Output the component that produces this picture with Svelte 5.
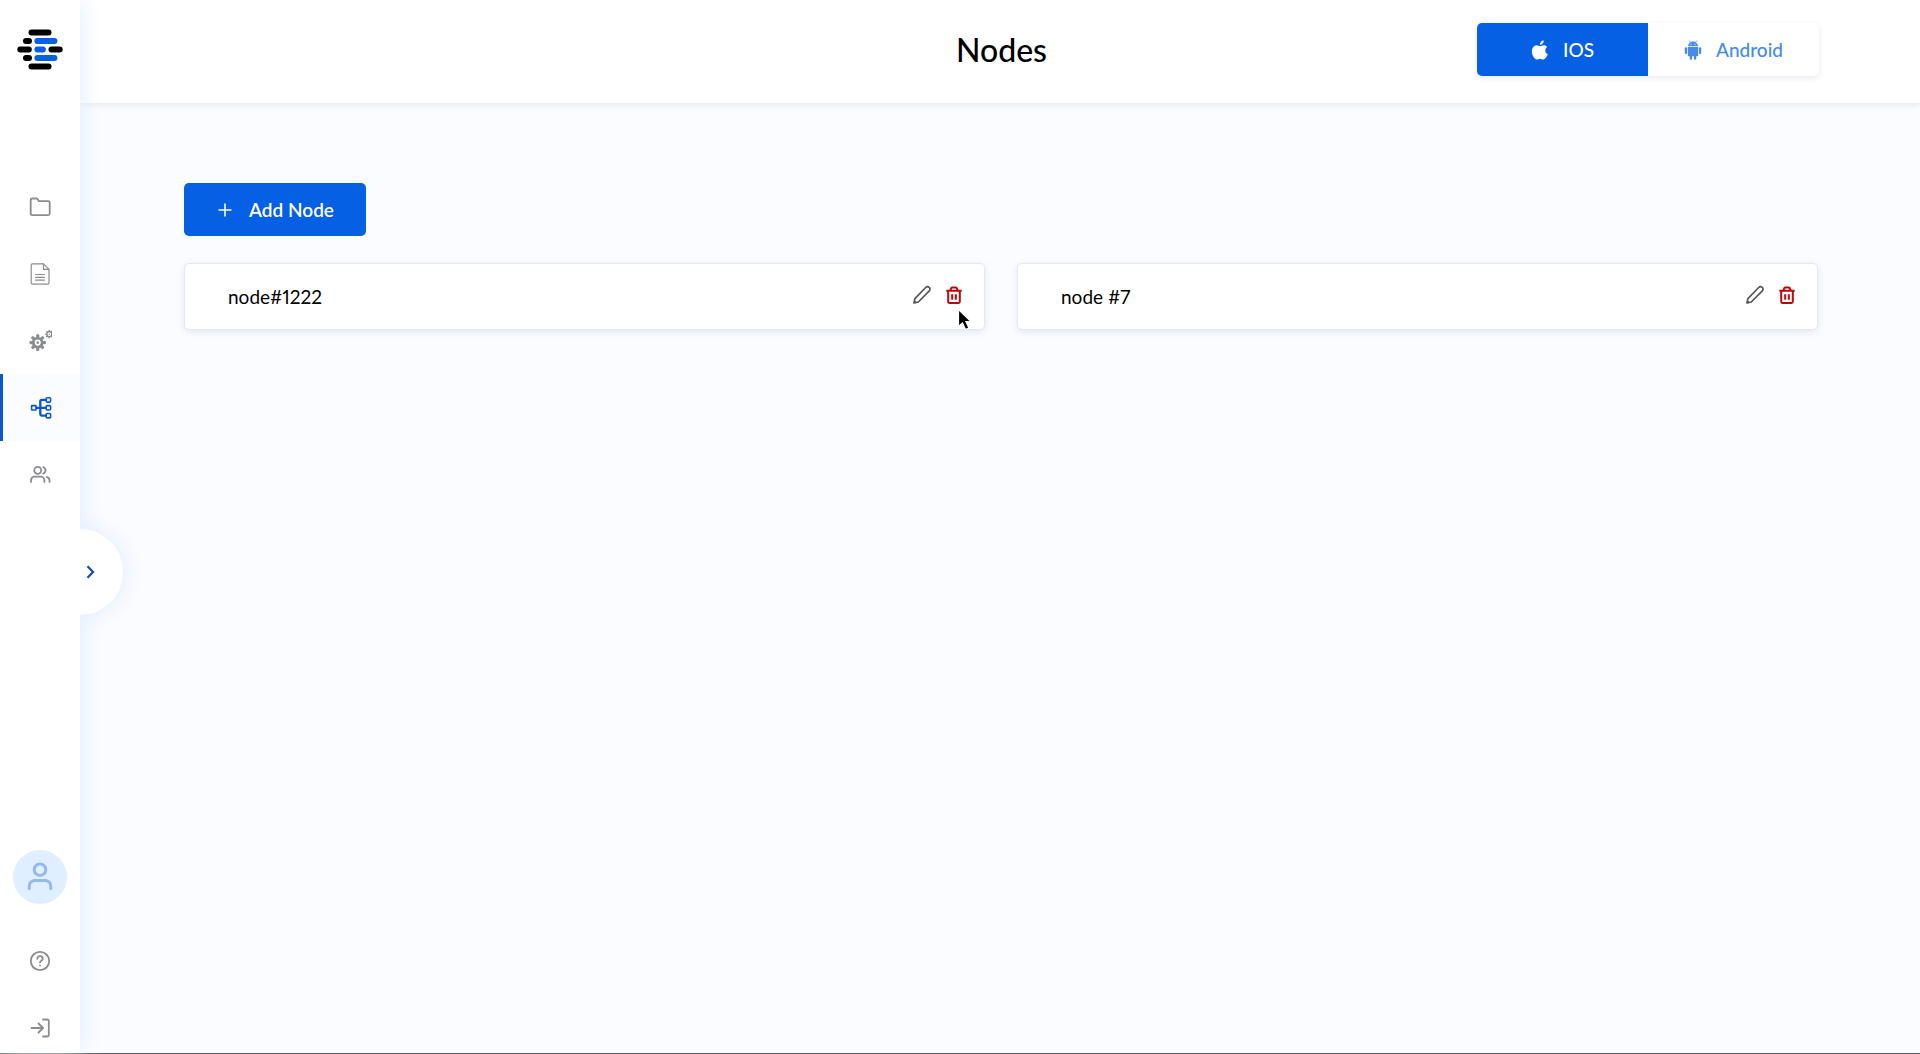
<script>
  let platform = $state('ios');
  const nodes = [{ name: 'node#1222', pointer: true }, { name: 'node #7', pointer: false }];
  const teeth = [0, 45, 90, 135, 180, 225, 270, 315];
  const links = [
    { id: 'folder', label: 'Projects' },
    { id: 'file', label: 'Documents' },
    { id: 'gears', label: 'Settings' },
    { id: 'tree', label: 'Nodes' },
    { id: 'users', label: 'Team' }
  ];
</script>

<div class="app">
  <aside class="sidebar">
    <a class="logo" href="#home" aria-label="Home">
      <svg width="46" height="41" viewBox="0 0 46 41">
        <g fill="#000">
          <rect x="11.5" y=".4" width="23" height="6" rx="3" />
          <rect x="6" y="9" width="9" height="6" rx="3" />
          <rect x=".3" y="17.5" width="14.500" height="6" rx="3" />
          <rect x="31.5" y="17.5" width="14.2" height="6" rx="3" />
          <rect x="6" y="26" width="9" height="6" rx="3" />
          <rect x="11.5" y="34.5" width="23" height="6" rx="3" />
        </g>
        <g fill="#0560e3">
          <rect x="17.4" y="9" width="23" height="6" rx="3" />
          <rect x="17.4" y="17.5" width="11.5" height="6" rx="3" />
          <rect x="17.4" y="26" width="23" height="6" rx="3" />
        </g>
      </svg>
    </a>

    <nav class="menu" aria-label="Main">
      {#each links as link (link.id)}
        <a class="item" class:active={link.id === 'tree'} href={'#' + link.id} aria-label={link.label}>
          <svg width="24" height="24" viewBox="0 0 24 24" fill="none" stroke="currentColor" stroke-width="1.8" stroke-linecap="round" stroke-linejoin="round">
            {#if link.id === 'folder'}
              <path d="M4.2 3.5h4.3c.6 0 1 .3 1.3.8l1 1.8h9.4a1.5 1.5 0 0 1 1.5 1.5v11a1.5 1.5 0 0 1-1.5 1.5h-16a1.5 1.5 0 0 1-1.5-1.5V5a1.5 1.5 0 0 1 1.5-1.5z" />
            {:else if link.id === 'file'}
              <g stroke-width="1.2">
                <path d="M4.5 1.8h11L21 7.3v13.5a1.4 1.4 0 0 1-1.4 1.4h-15a1.4 1.4 0 0 1-1.4-1.4V3.2a1.4 1.4 0 0 1 1.3-1.4z" />
                <path d="M15.5 1.8v5.5H21M7.500 12.500h9M7.500 15.300h9M7.500 18.100h9" />
              </g>
            {:else if link.id === 'gears'}
              <g stroke="none" fill="currentColor">
                {#each teeth as angle (angle)}
                  <rect x="8.1" y="5.3" width="3.2" height="5" rx="1.1" transform="rotate({angle} 9.7 13.6)" />
                  <rect x="20.5" y="1.100" width="1.600" height="2.200" rx=".5" transform="rotate({angle} 21.3 5.2)" />
                {/each}
              </g>
              <circle cx="9.7" cy="13.6" r="4.4" stroke-width="2.6" />
              <circle cx="9.7" cy="13.6" r="1.3" fill="currentColor" stroke="none" />
              <circle cx="21.3" cy="5.2" r="2.500" stroke-width="1.200" />
              <circle cx="21.3" cy="5.2" r=".7" fill="currentColor" stroke="none" />
            {:else if link.id === 'tree'}
              <g stroke-width="2.300"><path d="M8.3 11.800h9M18 3.900h-4.200a1.500 1.500 0 0 0-1.500 1.500v12.700a1.500 1.500 0 0 0 1.500 1.500H18" /></g>
              <g stroke-width="1.600">
                <rect x="3.600" y="9.600" width="4.400" height="4.400" rx=".5" />
                <rect x="18.200" y="1.700" width="4.400" height="4.400" rx="1" />
                <rect x="18.200" y="9.600" width="4.400" height="4.400" rx="1" />
                <rect x="18.200" y="17.500" width="4.400" height="4.400" rx="1" />
              </g>
            {:else}
              <circle cx="9.7" cy="7.300" r="3.5" />
              <path d="M3 18.900v-1.600a3.700 3.700 0 0 1 3.700-3.700h6a3.700 3.700 0 0 1 3.700 3.700v1.600M15.200 4a3.500 3.500 0 0 1 0 6.600M18.600 13.800c1.900.5 2.900 1.800 2.900 3.500v1.600" />
            {/if}
          </svg>
        </a>
      {/each}
    </nav>

    <div class="bottom">
      <button class="avatar" aria-label="Profile">
        <svg width="32" height="32" viewBox="0 0 32 32" fill="none" stroke="currentColor" stroke-width="3" stroke-linecap="round">
          <circle cx="16" cy="8.7" r="5.8" />
          <path d="M5.200 27.500v-2.300a5.700 5.700 0 0 1 5.700-5.700h10.200a5.700 5.700 0 0 1 5.700 5.700v2.300" />
        </svg>
      </button>
      <a class="item" href="#help" aria-label="Help">
        <svg width="24" height="24" viewBox="0 0 24 24" fill="none" stroke="currentColor" stroke-width="1.800" stroke-linecap="round">
          <circle cx="12" cy="12" r="9.200" />
          <path d="M9.300 9.800c0-1.600 1.100-2.600 2.700-2.600s2.800 1 2.800 2.500c0 2-2.800 2.100-2.800 3.900" />
          <circle cx="12" cy="16.600" r=".5" fill="currentColor" stroke-width="1" />
        </svg>
      </a>
      <a class="item" href="#logout" aria-label="Log out">
        <svg width="24" height="24" viewBox="0 0 24 24" fill="none" stroke="currentColor" stroke-width="1.800" stroke-linecap="round" stroke-linejoin="round">
          <path d="M3.500 12h11.300M10.500 7.500l4.600 4.500-4.600 4.500M15 3.500h4.200A1.600 1.600 0 0 1 20.800 5.100v13.800a1.600 1.600 0 0 1-1.600 1.600H15" />
        </svg>
      </a>
    </div>

    <button class="expand" aria-label="Expand menu">
      <svg width="12" height="16" viewBox="0 0 12 16" fill="none" stroke="currentColor" stroke-width="2.200"><path d="M2.500 2.200l5.600 5.800-5.600 5.800" /></svg>
    </button>
  </aside>

  <div class="page">
    <header class="header">
      <h1>Nodes</h1>
      <div class="toggle" role="group" aria-label="Platform">
        <button class:selected={platform === 'ios'} aria-pressed={platform === 'ios'} onclick={() => (platform = 'ios')}>
          <svg width="18" height="20" viewBox="0 0 18 20" fill="currentColor">
            <path d="M12.700 .4c.1 1.200-.4 2.300-1.100 3.100-.7.900-1.700 1.400-2.700 1.300-.1-1.200.4-2.300 1.100-3.100C10.700.9 11.700.4 12.700.4zM16.200 7.100c-1.200.8-1.900 1.900-1.900 3.400 0 1.700.9 3 2.500 3.700-.3 1-.9 2-1.500 2.900-.9 1.300-1.700 2.500-3.100 2.500-1.300 0-1.700-.8-3.200-.8s-2 .8-3.200.8c-1.300 0-2.300-1.300-3.200-2.600C.8 14.400.200 10.300 1.700 7.800c.9-1.600 2.400-2.500 3.900-2.500s2.400.8 3.600.8 1.900-.9 3.700-.9c1.300 0 2.500.6 3.300 1.900z" />
          </svg>
          <span>IOS</span>
        </button>
        <button class:selected={platform === 'android'} aria-pressed={platform === 'android'} onclick={() => (platform = 'android')}>
          <svg width="18" height="20" viewBox="0 0 18 20" fill="currentColor">
            <path d="M5.200.6l1.100 1.700M12.800.6l-1.100 1.700" stroke="currentColor" stroke-width=".8" />
            <path fill-rule="evenodd" d="M4 6.200a5 4.600 0 0 1 10 0zM6.500 3.800v1h1v-1zm4 0v1h1v-1z" />
            <path d="M3.800 7h10.400v8.200a1 1 0 0 1-1 1H4.800a1 1 0 0 1-1-1z" />
            <rect x=".8" y="7.200" width="2.200" height="7" rx="1.100" />
            <rect x="15" y="7.200" width="2.200" height="7" rx="1.100" />
            <rect x="5.700" y="14" width="2.300" height="5.800" rx="1.100" />
            <rect x="10" y="14" width="2.300" height="5.800" rx="1.100" />
          </svg>
          <span>Android</span>
        </button>
      </div>
    </header>

    <main class="content">
      <button class="add">
        <svg width="14" height="14" viewBox="0 0 14 14" stroke="currentColor" stroke-width="1.600"><path d="M7 .5v13M.5 7h13" /></svg>
        <span>Add Node</span>
      </button>
      <ul class="nodes">
        {#each nodes as node (node.name)}
          <li class="card">
            <span class="name">{node.name}</span>
            <button class="icon" aria-label="Edit {node.name}">
              <svg width="20" height="20" viewBox="0 0 20 20" fill="none" stroke="currentColor" stroke-width="1.700" stroke-linejoin="round">
                <path d="M2 18l.9-4.400L13.700 2.500a2.400 2.400 0 0 1 3.600 3.400L6.300 17z" />
                <path d="M2 18l.5-2.600 2 2z" fill="currentColor" stroke-width=".6" />
              </svg>
            </button>
            <button class="icon danger" aria-label="Delete {node.name}">
              <svg width="20" height="20" viewBox="0 0 20 20" fill="none" stroke="currentColor" stroke-width="2" stroke-linejoin="round">
                <path d="M2.300 5.800h15.400M6.300 5.400l1-2.200a1.200 1.200 0 0 1 1-.7h3.400a1.200 1.200 0 0 1 1 .7l1 2.200M4.200 6v10.500a1.500 1.500 0 0 0 1.500 1.500h8.600a1.500 1.500 0 0 0 1.500-1.500V6M8.200 9.200v5.600M11.800 9.200v5.600" />
              </svg>
            </button>
            {#if node.pointer}
              <svg class="pointer" width="16" height="24" viewBox="0 0 16 24" aria-hidden="true">
                <path d="M1.500 1.500v17l4-3.600 3 6.600 3.400-1.500-3-6.300h5.300z" fill="#000" stroke="#fff" stroke-width="1.200" />
              </svg>
            {/if}
          </li>
        {/each}
      </ul>
    </main>
  </div>
</div>

<style>
  :global(body) {
    background: #fbfcff;
  }
  .app {
    box-sizing: border-box;
    display: flex;
    min-height: 100vh;
    border-bottom: 1px solid #5c5d60;
    font-family: Lato, 'Open Sans', sans-serif;
    color: #000;
  }
  button {
    border: 0;
    margin: 0;
    padding: 0;
    font: inherit;
    color: inherit;
    background: none;
    cursor: pointer;
  }
  svg {
    display: block;
    flex: none;
  }
  .sidebar {
    position: relative;
    z-index: 1;
    flex: none;
    display: flex;
    flex-direction: column;
    width: 80px;
    background: #fff;
    box-shadow: 0 0 24px #deedff;
  }
  .logo {
    display: flex;
    justify-content: center;
    padding: 29px 0 103px;
  }
  .item {
    display: flex;
    align-items: center;
    justify-content: center;
    box-sizing: border-box;
    height: 67px;
    color: #8b8c8f;
  }
  .item.active {
    color: #0b57d0;
    background: #fbfcff;
    box-shadow: inset 3px 0 #0b57d0;
  }
  .bottom {
    display: flex;
    flex-direction: column;
    gap: 16px;
    margin-top: auto;
  }
  .bottom .item {
    height: 51px;
  }
  .avatar {
    display: grid;
    place-items: center;
    align-self: center;
    width: 54px;
    height: 54px;
    margin-bottom: 15px;
    border-radius: 50%;
    background: #e0efff;
    color: #92b9ec;
  }
  .expand {
    position: absolute;
    top: calc(50% + 45px);
    left: 37px;
    transform: translateY(-50%);
    z-index: -1;
    display: flex;
    align-items: center;
    box-sizing: border-box;
    width: 86px;
    height: 86px;
    padding-left: 48px;
    border-radius: 50%;
    background: #fff;
    color: #0b4eb0;
    box-shadow: 0 0 24px #deebfc;
    clip-path: inset(-24px -24px -24px 43px);
  }
  .page {
    flex: 1;
    min-width: 0;
  }
  .header {
    display: grid;
    grid-template-columns: 1fr auto 1fr;
    align-items: center;
    box-sizing: border-box;
    height: 103px;
    padding: 0 101px 4px 104px;
    background: #fff;
    box-shadow: 0 2px 6px #e4e6f0;
  }
  h1 {
    grid-column: 2;
    margin: 0;
    font-size: 32px;
    line-height: 38px;
    font-weight: 500;
  }
  .toggle {
    justify-self: end;
    display: grid;
    grid-template-columns: 1fr 1fr;
    width: 342px;
    border-radius: 5px;
    overflow: hidden;
    background: #fff;
    box-shadow: 0 2px 6px #e6e9f0;
    font-size: 19px;
    line-height: 24px;
    font-weight: 500;
  }
  .toggle button {
    display: flex;
    align-items: center;
    justify-content: center;
    gap: 14px;
    height: 53px;
    color: #468be8;
  }
  .toggle .selected {
    background: #0560e3;
    color: #fff;
  }
  .content {
    padding: 80px 102px 80px 104px;
  }
  .add {
    display: flex;
    align-items: center;
    gap: 17px;
    height: 53px;
    padding: 0 32px 0 34px;
    border-radius: 5px;
    background: #0560e3;
    color: #fff;
    font-size: 19px;
    line-height: 24px;
    font-weight: 600;
  }
  .nodes {
    display: grid;
    grid-template-columns: 1fr 1fr;
    gap: 32px;
    margin: 27px 0 0;
    padding: 0;
    list-style: none;
  }
  .card {
    position: relative;
    display: flex;
    align-items: center;
    gap: 12px;
    box-sizing: border-box;
    min-height: 67px;
    padding: 0 20px 0 43px;
    border: 1px solid #dfe9f8;
    border-radius: 5px;
    background: #fff;
    box-shadow: 0 2px 7px #e0e6f2;
    font-size: 19px;
    line-height: 24px;
    font-variant-numeric: proportional-nums;
  }
  .name {
    flex: 1;
  }
  .icon {
    padding-bottom: 3px;
    color: #55565a;
  }
  .danger {
    color: #ba0a0a;
  }
  .pointer {
    position: absolute;
    right: 11px;
    bottom: -3px;
  }
</style>
